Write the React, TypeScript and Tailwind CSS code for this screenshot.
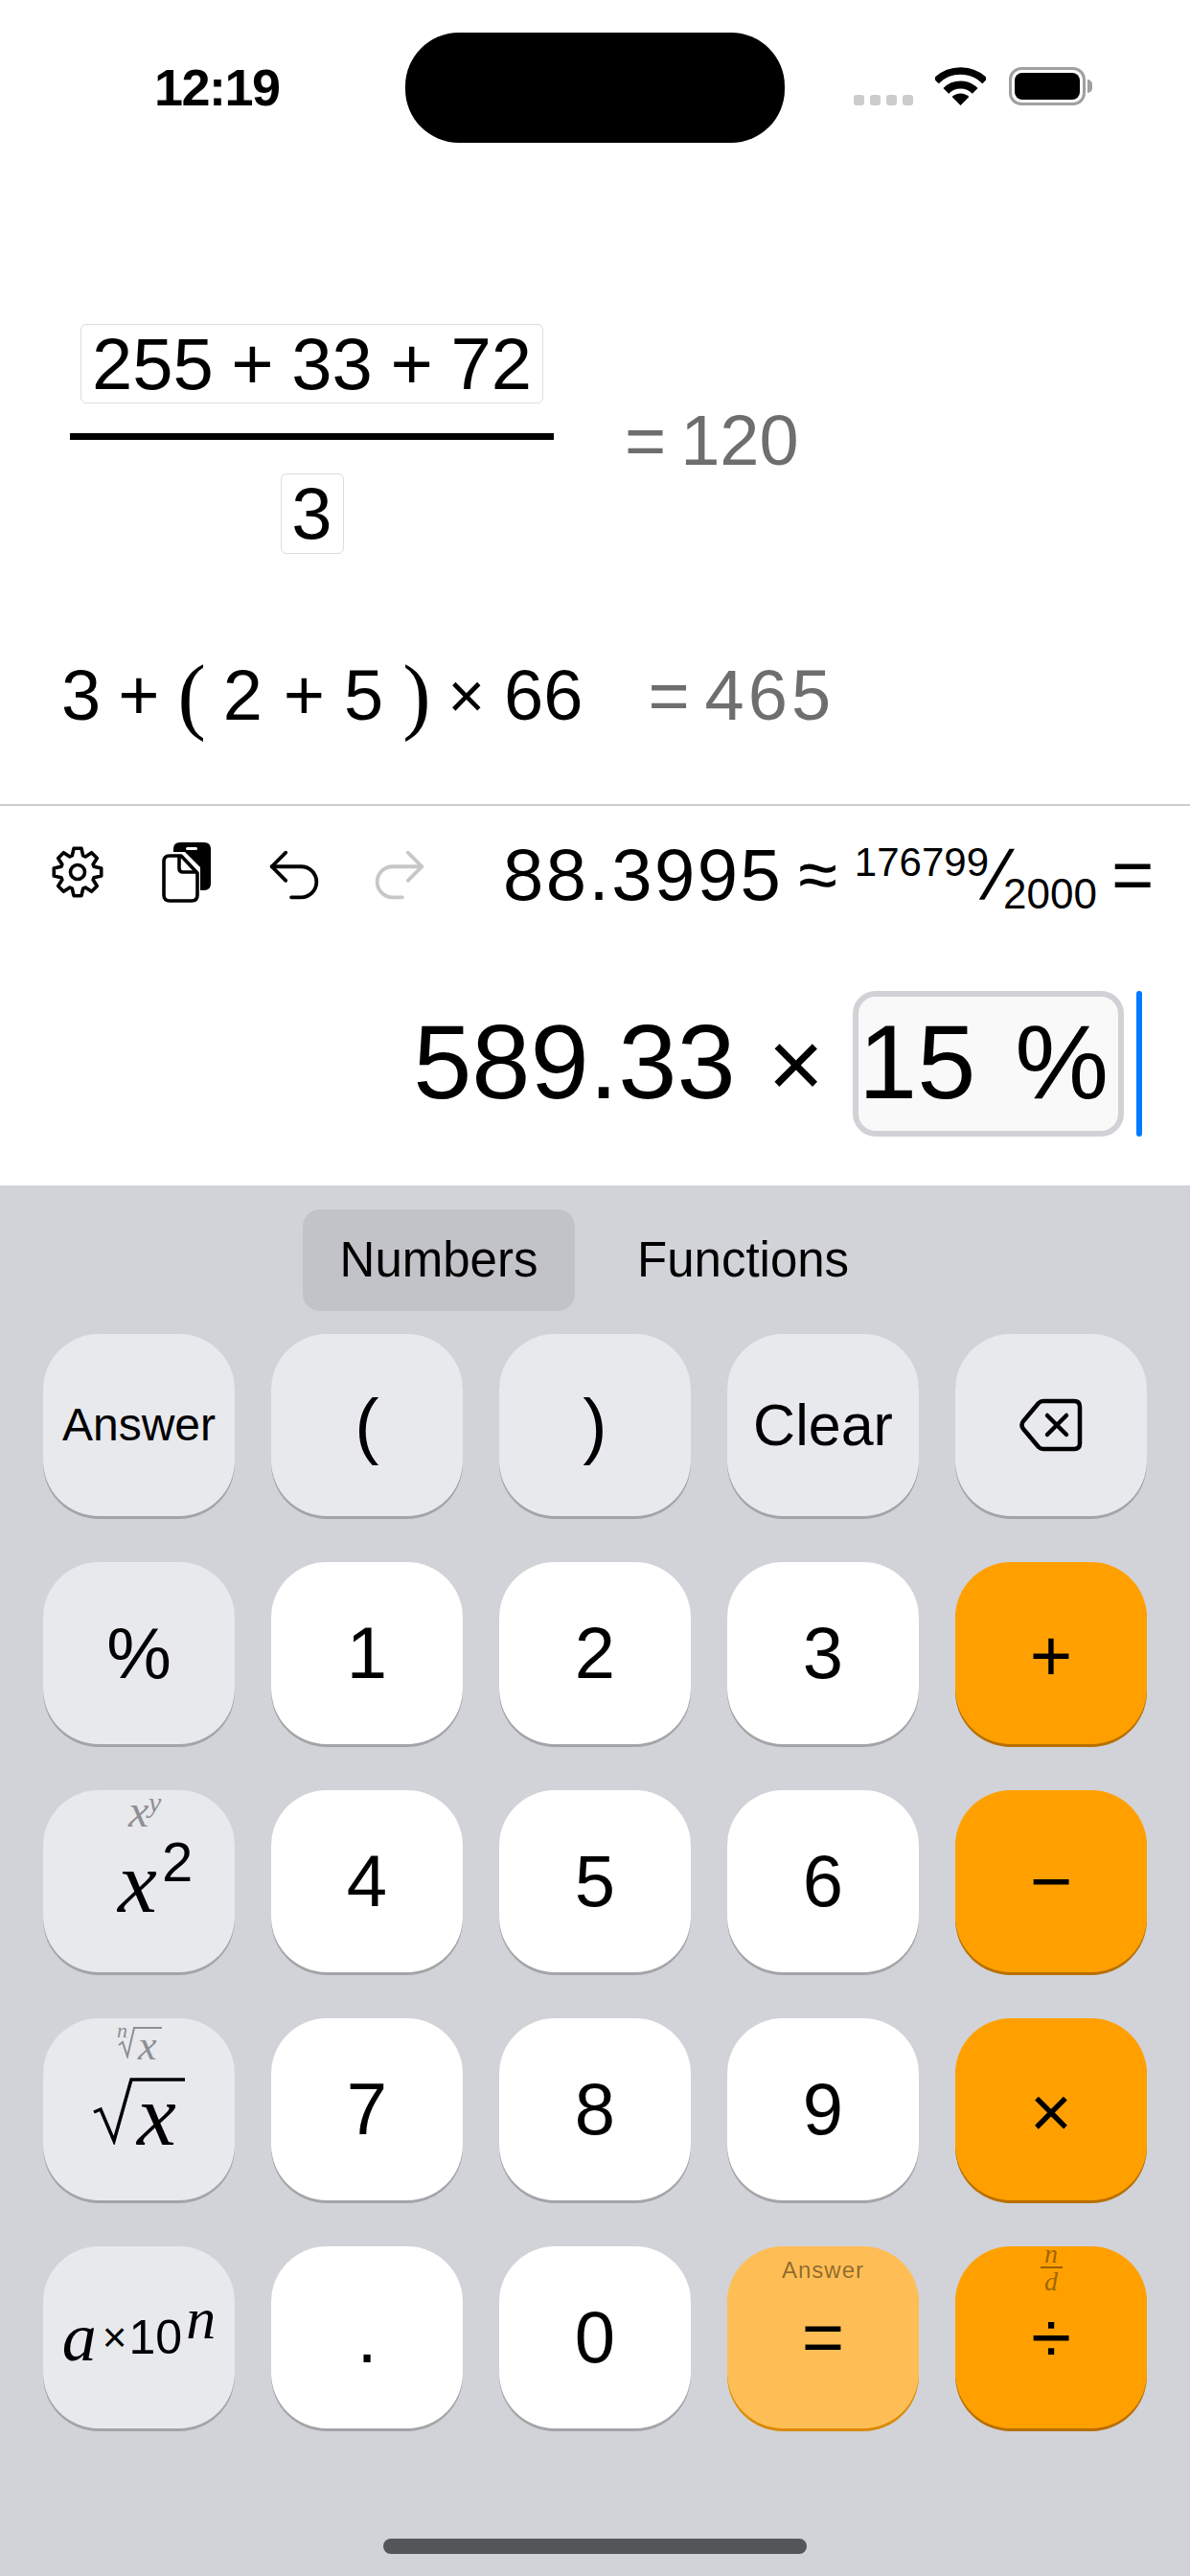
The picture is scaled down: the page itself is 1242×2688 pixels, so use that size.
import { Undo2, Redo2 } from "lucide-react";

const SANS = "font-['Liberation_Sans',Arial,sans-serif]";
const MATH = "font-['Liberation_Serif',serif] italic";

function gearPath() {
  const cx = 27;
  const cy = 27;
  const pts: string[] = [];
  for (let i = 0; i < 8; i++) {
    const a = (i * Math.PI) / 4 - Math.PI / 2;
    const d = 0.2;
    const p = (r: number, t: number) =>
      `${(cx + r * Math.cos(t)).toFixed(1)} ${(cy + r * Math.sin(t)).toFixed(1)}`;
    pts.push(p(18, a - d * 1.6), p(25, a - d * 0.8), p(25, a + d * 0.8), p(18, a + d * 1.6));
  }
  return "M" + pts.join("L") + "Z";
}

function WifiIcon() {
  return (
    <svg width="53" height="40" viewBox="0 0 53 40">
      <path d="M1 14.5A36 36 0 0 1 52 14.5" fill="none" stroke="#000" strokeWidth="7.5" />
      <path d="M11.3 24.8A21.5 21.5 0 0 1 41.7 24.8" fill="none" stroke="#000" strokeWidth="8" />
      <path d="M26.5 40L17.6 31.1A12.6 12.6 0 0 1 35.4 31.1Z" fill="#000" />
    </svg>
  );
}

function BatteryIcon() {
  return (
    <div className="flex items-center">
      <div className="w-[80px] h-[40px] rounded-[13px] border-[3px] border-[#a0a0a0] p-[3px]">
        <div className="w-full h-full bg-black rounded-[8px]" />
      </div>
      <div className="w-[5px] h-[14px] ml-[2px] bg-[#a0a0a0] rounded-r-full" />
    </div>
  );
}

function StatusBar() {
  return (
    <div className={`h-[183px] pt-[34px] flex items-start ${SANS}`}>
      <div className="w-[423px] h-[115px] flex items-center pl-[161px] text-[54px] font-bold tracking-[-1.5px] text-black">
        12:19
      </div>
      <div className="w-[396px] h-[115px] bg-black rounded-[56px]" />
      <div className="flex-1 h-[115px] flex items-start pl-[72px] pt-[36px]">
        <div className="flex gap-[6px] mt-[29px]">
          <div className="w-[11px] h-[11px] rounded-[3px] bg-[#cccccc]" />
          <div className="w-[11px] h-[11px] rounded-[3px] bg-[#cccccc]" />
          <div className="w-[11px] h-[11px] rounded-[3px] bg-[#cccccc]" />
          <div className="w-[11px] h-[11px] rounded-[3px] bg-[#cccccc]" />
        </div>
        <div className="ml-[23px]">
          <WifiIcon />
        </div>
        <div className="ml-[24px]">
          <BatteryIcon />
        </div>
      </div>
    </div>
  );
}

function Expressions() {
  return (
    <div className={`h-[656px] pt-[155px] ${SANS} text-[74px] text-black`}>
      <div className="flex items-center pl-[73px] h-[240px]">
        <div className="w-[505px] flex flex-col items-center">
          <div className="w-[483px] h-[83px] border border-[#dddddd] rounded-[6px] flex items-center justify-center whitespace-pre leading-none text-[76px] [word-spacing:-2.5px]">
            255 + 33 + 72
          </div>
          <div className="w-full h-[7px] bg-black mt-[31px]" />
          <div className="w-[66px] h-[84px] mt-[35px] border border-[#dddddd] rounded-[6px] flex items-center justify-center leading-none text-[76px]">
            3
          </div>
        </div>
        <div className="ml-[74px] mt-[4px] flex items-center text-[#6e6e6e] leading-none">
          <span>=</span>
          <span className="ml-[15px]">120</span>
        </div>
      </div>
      <div className="flex items-center h-[90px] mt-[103px] pl-[64px] leading-none whitespace-pre">
        <span>3</span>
        <span className="ml-[18px]">+</span>
        <span className="ml-[19px] text-[88px] font-['Liberation_Serif',serif]">(</span>
        <span className="ml-[18px]">2</span>
        <span className="ml-[22px]">+</span>
        <span className="ml-[20px]">5</span>
        <span className="ml-[20px] text-[88px] font-['Liberation_Serif',serif]">)</span>
        <span className="ml-[18px] text-[66px]">×</span>
        <span className="ml-[20px]">66</span>
        <span className="ml-[68px] text-[#6e6e6e]">=</span>
        <span className="ml-[16px] text-[#6e6e6e] tracking-[4px]">465</span>
      </div>
    </div>
  );
}

function DocsIcon() {
  return (
    <svg width="52" height="64" viewBox="0 0 52 64">
      <path d="M19 0H44Q51 0 51 7V43Q51 50 44 50H40V26L24 10H12V7Q12 0 19 0Z" fill="#000" />
      <rect x="25" y="5" width="12" height="3" rx="1.5" fill="#fff" />
      <path
        d="M8 14H20L37 32V55Q37 61 31 61H8Q2 61 2 55V20Q2 14 8 14Z"
        fill="#fff"
        stroke="#000"
        strokeWidth="3.6"
        strokeLinejoin="round"
      />
      <path d="M18 14V27Q18 31 22 31H37" fill="none" stroke="#000" strokeWidth="3.6" />
    </svg>
  );
}

function Toolbar() {
  return (
    <div className={`h-[160px] flex items-start pt-[40px] ${SANS}`}>
      <div className="w-[525px] h-[64px] flex items-center pl-[54px]">
        <svg width="54" height="54" viewBox="0 0 54 54" className="-mt-[6px]">
          <path d={gearPath()} fill="none" stroke="#000" strokeWidth="3.6" strokeLinejoin="round" />
          <circle cx="27" cy="27" r="7.5" fill="none" stroke="#000" strokeWidth="3.6" />
        </svg>
        <div className="ml-[61px] -mt-[4px]">
          <DocsIcon />
        </div>
        <Undo2 size={70} strokeWidth={1.3} color="#000" className="ml-[51px]" />
        <Redo2 size={70} strokeWidth={1.3} color="#c7c7c7" className="ml-[40px]" />
      </div>
      <div className="flex items-center h-[64px] text-black whitespace-pre leading-none text-[76px]">
        <span className="tracking-[2.5px]">88.3995</span>
        <span className="ml-[16px] text-[74px]">≈</span>
        <span className="ml-[18px] text-[42px] self-start -mt-[2px]">176799</span>
        <span className="inline-block w-[20px] -ml-[2px] text-[72px] -skew-x-[18deg]">/</span>
        <span className="-ml-[3px] text-[44px] self-end -mb-[10px]">2000</span>
        <span className="ml-[15px]">=</span>
      </div>
    </div>
  );
}

function Entry() {
  return (
    <div className={`h-[236px] flex items-start justify-end pr-[50px] pt-[33px] ${SANS} text-[110px] text-black leading-none`}>
      <div className="h-[152px] pb-[4px] flex items-center">589.33</div>
      <div className="h-[152px] flex items-center ml-[34px] mr-[30px] text-[100px]">×</div>
      <div className="w-[283px] h-[152px] pb-[4px] border-[6px] border-[#d1d1d6] bg-[#f9f9f9] rounded-[24px] flex items-center justify-between pr-[10px]">
        <span>15</span>
        <span>%</span>
      </div>
      <div className="w-[6px] h-[152px] ml-[13px] bg-[#007aff] rounded-full" />
    </div>
  );
}

type Tone = "gray" | "white" | "orange" | "soft";

const TONES: Record<Tone, string> = {
  gray: "bg-[#e8e9ed] shadow-[0_3px_0_#a3a4a8]",
  white: "bg-white shadow-[0_3px_0_#a3a4a8]",
  orange: "bg-[#ffa000] shadow-[0_3px_0_#b86f00]",
  soft: "bg-[#ffbe55] shadow-[0_3px_0_#d98a00]",
};

function Key({
  tone = "white",
  size = "text-[76px]",
  className = "",
  children,
}: {
  tone?: Tone;
  size?: string;
  className?: string;
  children?: React.ReactNode;
}) {
  return (
    <div
      className={`relative h-[190px] rounded-[58px] flex items-center justify-center text-black leading-none ${size} ${TONES[tone]} ${className}`}
    >
      {children}
    </div>
  );
}

function BackspaceIcon() {
  return (
    <svg width="66" height="56" viewBox="0 0 66 56" fill="none" stroke="#000" strokeWidth="4.5" strokeLinejoin="round" strokeLinecap="round">
      <path d="M25 3H57Q63 3 63 9V47Q63 53 57 53H25Q22 53 20 51L4 32Q1 28 4 24L20 5Q22 3 25 3Z" />
      <path d="M29 18L49 38M49 18L29 38" />
    </svg>
  );
}

function Keyboard() {
  return (
    <div className={`h-[1453px] bg-[#d1d3d9] ${SANS}`}>
      <div className="flex pl-[316px] pt-[25px] text-[51px] text-black">
        <div className="w-[284px] h-[106px] rounded-[18px] bg-[#c2c3c8] flex items-center justify-center">
          Numbers
        </div>
        <div className="h-[106px] ml-[65px] flex items-center">Functions</div>
      </div>
      <div className="grid grid-cols-5 gap-x-[38px] gap-y-[48px] px-[45px] mt-[24px]">
        <Key tone="gray" size="text-[48px]">Answer</Key>
        <Key tone="gray">(</Key>
        <Key tone="gray">)</Key>
        <Key tone="gray" size="text-[61px]">Clear</Key>
        <Key tone="gray"><BackspaceIcon /></Key>

        <Key tone="gray">%</Key>
        <Key>1</Key>
        <Key>2</Key>
        <Key>3</Key>
        <Key tone="orange" className="pt-[6px]">+</Key>

        <Key tone="gray">
          <span className={`absolute left-[89px] -top-[2px] text-[48px] text-[#8e8e93] ${MATH}`}>x</span>
          <span className={`absolute left-[110px] -top-[2px] text-[30px] text-[#8e8e93] ${MATH}`}>y</span>
          <span className={`absolute left-[78px] top-[50px] text-[92px] ${MATH}`}>x</span>
          <span className="absolute left-[124px] top-[46px] text-[58px]">2</span>
        </Key>
        <Key>4</Key>
        <Key>5</Key>
        <Key>6</Key>
        <Key tone="orange">−</Key>

        <Key tone="gray">
          <span className={`absolute left-[77px] top-[2px] text-[22px] text-[#8e8e93] ${MATH}`}>n</span>
          <svg className="absolute left-[78px] top-[8px]" width="46" height="34" viewBox="0 0 46 34" fill="none" stroke="#8e8e93" strokeWidth="2">
            <path d="M1 20L5 17L10 32L17 2H46" />
          </svg>
          <span className={`absolute left-[99px] top-[7px] text-[44px] text-[#8e8e93] ${MATH}`}>x</span>
          <svg className="absolute left-[52px] top-[62px]" width="100" height="70" viewBox="0 0 100 70" fill="none" stroke="#000" strokeWidth="3.5">
            <path d="M1 36L8 33L22 66L40 2H96" />
          </svg>
          <span className={`absolute left-[98px] top-[55px] text-[92px] ${MATH}`}>x</span>
        </Key>
        <Key>7</Key>
        <Key>8</Key>
        <Key>9</Key>
        <Key tone="orange" className="pt-[6px]">×</Key>

        <Key tone="gray">
          <span className={`text-[72px] ${MATH}`}>a</span>
          <span className="text-[44px] ml-[6px]">×</span>
          <span className="text-[50px] ml-[2px]">10</span>
          <span className={`text-[62px] ml-[4px] -mt-[40px] ${MATH}`}>n</span>
        </Key>
        <Key>.</Key>
        <Key>0</Key>
        <Key tone="soft">
          <span className="absolute inset-x-0 top-[13px] text-center text-[24px] tracking-[1px] text-black/45">Answer</span>
          =
        </Key>
        <Key tone="orange">
          <span className={`absolute left-0 right-0 -top-[6px] flex flex-col items-center text-[28px] text-black/40 ${MATH}`}>
            <span>n</span>
            <span className="w-[23px] h-[2px] -mt-[1px] bg-black/40" />
            <span>d</span>
          </span>
          ÷
        </Key>
      </div>
      <div className="w-[442px] h-[16px] mx-auto mt-[115px] rounded-full bg-[#55565a]" />
    </div>
  );
}

export default function App() {
  return (
    <div className="w-[1242px] h-[2688px] bg-white overflow-hidden">
      <StatusBar />
      <Expressions />
      <div className="h-[2px] bg-[#cccccc]" />
      <Toolbar />
      <Entry />
      <Keyboard />
    </div>
  );
}
